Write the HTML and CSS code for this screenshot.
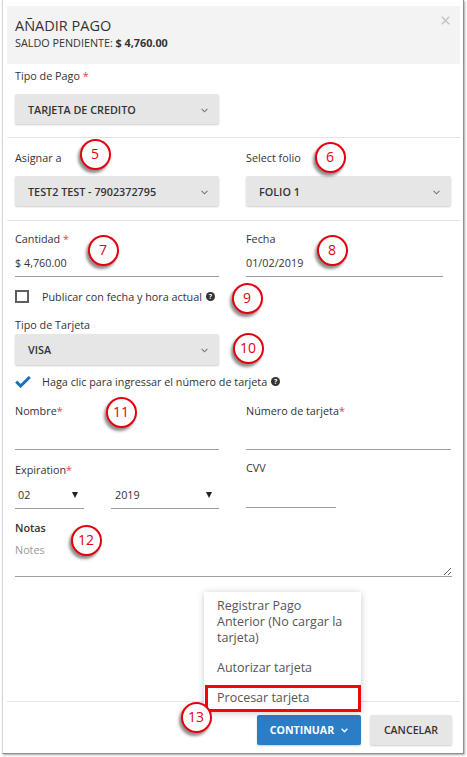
FILE: index.html
```html
<!DOCTYPE html>
<html lang="es">
<head>
<meta charset="utf-8">
<title>Añadir pago</title>
<link rel="stylesheet" href="styles.css">
</head>
<body>
<div class="frame">
  <div class="modal-header">
    <div class="titles">
      <h1 class="title">AÑADIR PAGO</h1>
      <p class="subtitle">SALDO PENDIENTE: <b>$ 4,760.00</b></p>
    </div>
    <button class="close" type="button" aria-label="Cerrar">
      <svg width="9" height="9" viewBox="0 0 9 9"><path d="M0.8 0.8 L8.2 8.2 M8.2 0.8 L0.8 8.2" stroke="#c4c4c4" stroke-width="1.5" fill="none"/></svg>
    </button>
  </div>

  <form class="modal-body">
    <section class="section s1">
      <label class="label">Tipo de Pago <span class="req">*</span></label>
      <div class="select col-left">
        <span>TARJETA DE CREDITO</span>
        <svg class="chev" width="7" height="5" viewBox="0 0 7 5"><path d="M0.6 0.8 L3.5 3.8 L6.4 0.8" stroke="#777" stroke-width="1.1" fill="none"/></svg>
      </div>
    </section>

    <section class="section s2">
      <div class="grid">
        <div class="field">
          <label class="label">Asignar a</label>
          <div class="select">
            <span>TEST2 TEST - 7902372795</span>
            <svg class="chev" width="7" height="5" viewBox="0 0 7 5"><path d="M0.6 0.8 L3.5 3.8 L6.4 0.8" stroke="#777" stroke-width="1.1" fill="none"/></svg>
          </div>
        </div>
        <div class="field">
          <label class="label">Select folio</label>
          <div class="select">
            <span>FOLIO 1</span>
            <svg class="chev" width="7" height="5" viewBox="0 0 7 5"><path d="M0.6 0.8 L3.5 3.8 L6.4 0.8" stroke="#777" stroke-width="1.1" fill="none"/></svg>
          </div>
        </div>
      </div>
    </section>

    <section class="s3">
      <div class="grid">
        <div class="field">
          <label class="label">Cantidad <span class="req">*</span></label>
          <div class="input">$ 4,760.00</div>
        </div>
        <div class="field">
          <label class="label">Fecha</label>
          <div class="input fecha">01/02/2019</div>
        </div>
      </div>

      <div class="check-row r1">
        <span class="checkbox"></span>
        <span>Publicar con fecha y hora actual</span>
        <span class="help">?</span>
      </div>

      <label class="label card-label">Tipo de Tarjeta</label>
      <div class="select col-left tight">
        <span>VISA</span>
        <svg class="chev" width="7" height="5" viewBox="0 0 7 5"><path d="M0.6 0.8 L3.5 3.8 L6.4 0.8" stroke="#777" stroke-width="1.1" fill="none"/></svg>
      </div>

      <div class="check-row r2">
        <svg class="tick" width="16" height="12" viewBox="0 0 16 12"><path d="M1.2 5.6 L5.6 10 L14.8 1" stroke="#1a72b9" stroke-width="3" fill="none"/></svg>
        <span>Haga clic para ingressar el número de tarjeta</span>
        <span class="help">?</span>
      </div>

      <div class="grid row-name">
        <div class="field">
          <label class="label">Nombre<span class="req">*</span></label>
          <div class="input tall"></div>
        </div>
        <div class="field">
          <label class="label">Número de tarjeta<span class="req">*</span></label>
          <div class="input tall"></div>
        </div>
      </div>

      <div class="grid row-exp">
        <div class="field exp">
          <label class="label">Expiration<span class="req">*</span></label>
          <div class="exp-selects">
            <div class="mini-select month">
              <span>02</span>
              <svg width="6" height="6" viewBox="0 0 6 6"><path d="M0 0 H6 L3 6 Z" fill="#222"/></svg>
            </div>
            <div class="mini-select year">
              <span>2019</span>
              <svg width="6" height="6" viewBox="0 0 6 6"><path d="M0 0 H6 L3 6 Z" fill="#222"/></svg>
            </div>
          </div>
        </div>
        <div class="field cvv">
          <label class="label">CVV</label>
          <div class="input cvv-input"></div>
        </div>
      </div>

      <label class="label bold notes-label">Notas</label>
      <textarea class="notes" placeholder="Notes"></textarea>
    </section>
  </form>

  <div class="modal-footer">
    <div class="btn-group">
      <ul class="menu">
        <li class="item i1">Registrar Pago Anterior (No cargar la tarjeta)</li>
        <li class="item i2">Autorizar tarjeta</li>
        <li class="item i3">Procesar tarjeta</li>
      </ul>
      <button class="btn btn-primary" type="button">
        <span>CONTINUAR</span>
        <svg width="7" height="5" viewBox="0 0 7 5"><path d="M0.6 0.8 L3.5 3.8 L6.4 0.8" stroke="#fff" stroke-width="1.3" fill="none"/></svg>
      </button>
    </div>
    <button class="btn btn-default" type="button">CANCELAR</button>
  </div>
</div>

<div class="callout c5">5</div>
<div class="callout c6">6</div>
<div class="callout c7">7</div>
<div class="callout c8">8</div>
<div class="callout c9">9</div>
<div class="callout c10">10</div>
<div class="callout c11">11</div>
<div class="callout c12">12</div>
<div class="callout c13">13</div>
</body>
</html>
```

FILE: styles.css
```css
* { box-sizing: border-box; }

html, body {
  margin: 0;
  padding: 0;
}

body {
  position: relative;
  width: 467px;
  height: 757px;
  overflow: hidden;
  background: #fff;
  color: #333;
  font-family: "Open Sans", "DejaVu Sans", sans-serif;
}

.frame {
  margin-left: 2px;
  width: 462px;
  height: 754px;
  border-left: 1px solid #d6d6d6;
  border-right: 1px solid #8e8e8e;
  border-bottom: 1px solid #8e8e8e;
  box-shadow: 1px 1px 2px rgba(0, 0, 0, 0.35);
  padding: 6px 3px 0 4px;
  display: flex;
  flex-direction: column;
}

/* header */
.modal-header {
  height: 58px;
  background: #f3f3f3;
  padding: 10px 10px 0 8px;
  display: flex;
  justify-content: space-between;
  align-items: flex-start;
}

.title {
  margin: 0;
  font-size: 14.5px;
  line-height: 20px;
  font-weight: 400;
  color: #333;
}

.subtitle {
  margin: 0;
  font-size: 10.8px;
  line-height: 14px;
  color: #333;
}

.subtitle b { font-weight: 700; }

.close {
  width: 9px;
  height: 9px;
  padding: 0;
  margin: 0;
  border: 0;
  background: none;
  display: flex;
}

/* body */
.modal-body { margin: 0; }

.section {
  padding-left: 8px;
  padding-right: 8px;
  border-bottom: 1px solid #e4e4e4;
}

.s1 { padding-top: 3px; padding-bottom: 13px; }
.s2 { padding-top: 11px; padding-bottom: 14px; }
.s3 { padding: 9px 8px 0; }

.label {
  display: block;
  font-size: 10.8px;
  line-height: 17px;
  color: #333;
}

.label.bold { font-weight: 600; }

.req { color: #e8433f; }

.grid {
  display: grid;
  grid-template-columns: 204px 205px;
  column-gap: 27px;
  align-items: start;
}

.select {
  height: 30px;
  margin-top: 10px;
  background: #e6e6e6;
  border-radius: 2px;
  box-shadow: 0 1px 2px rgba(0, 0, 0, 0.2);
  display: flex;
  align-items: center;
  justify-content: space-between;
  padding: 0 11px 0 13px;
  font-size: 10.8px;
  font-weight: 600;
  color: #333;
}

.select .chev { margin-top: 2px; }

.col-left { width: 204px; }

.select.tight {
  margin-top: 1px;
  height: 31px;
}

.input {
  height: 30px;
  padding: 7px 0 5px;
  font-size: 10.8px;
  line-height: 17px;
  color: #333;
  border-bottom: 1px solid #9e9e9e;
}

.input.fecha { width: 197px; }
.input.tall { height: 31px; padding-top: 8px; }

.check-row {
  display: flex;
  align-items: center;
  font-size: 10.8px;
  line-height: 17px;
  color: #333;
}

.check-row.r1 { margin-top: 11px; }
.check-row.r2 { margin-top: 8px; }

.checkbox {
  width: 14px;
  height: 13px;
  border: 2px solid #5e5e5e;
  background: #fff;
  margin-right: 13px;
}

.tick { margin-right: 11px; }

.help {
  width: 9px;
  height: 9px;
  margin-left: 4px;
  border-radius: 50%;
  background: #333;
  color: #fff;
  font-size: 7px;
  font-weight: 700;
  line-height: 9px;
  text-align: center;
}

.card-label { margin-top: 11px; }

.row-name { margin-top: 12px; }

.exp { margin-top: 11px; }
.cvv { margin-top: 9px; }

.exp-selects {
  display: flex;
  gap: 27px;
}

.mini-select {
  height: 31px;
  padding-top: 8px;
  padding-bottom: 5px;
  display: flex;
  align-items: center;
  justify-content: space-between;
  font-size: 10.8px;
  line-height: 17px;
  color: #333;
  border-bottom: 1px solid #9e9e9e;
}

.mini-select.month { width: 69px; padding-left: 3px; padding-right: 6px; }
.mini-select.year { width: 108px; padding-left: 4px; padding-right: 7px; }

.cvv-input { width: 90px; height: 32px; padding-top: 9px; }

.notes-label { margin-top: 10px; }

.notes {
  display: block;
  width: 100%;
  height: 41px;
  margin: 0;
  padding: 5px 0 18px;
  border: 0;
  border-bottom: 1px solid #9e9e9e;
  border-radius: 0;
  background: #fff;
  font-family: "Open Sans", "DejaVu Sans", sans-serif;
  font-size: 10.8px;
  line-height: 17px;
  color: #333;
  resize: vertical;
  outline: none;
}

.notes::placeholder { color: #9a9a9a; }

/* footer */
.modal-footer {
  margin-top: auto;
  border-top: 1px solid #e4e4e4;
  padding: 13px 8px 8px;
  display: flex;
  justify-content: flex-end;
  gap: 9px;
}

.btn-group { position: relative; }

.btn {
  height: 30px;
  margin: 0;
  border: 0;
  border-radius: 2px;
  font-family: "Open Sans", "DejaVu Sans", sans-serif;
  font-size: 10.6px;
  display: flex;
  align-items: center;
  justify-content: center;
  box-shadow: 0 1px 2px rgba(0, 0, 0, 0.2);
}

.btn-primary {
  width: 104px;
  background: #2b7dc6;
  color: #fff;
  font-weight: 700;
  gap: 7px;
}

.btn-default {
  width: 82px;
  background: #e6e6e6;
  color: #333;
  font-weight: 600;
}

.menu {
  position: absolute;
  right: 0;
  bottom: calc(100% + 3px);
  width: 157px;
  margin: 0;
  padding: 6px 0 0;
  list-style: none;
  background: #fff;
  box-shadow: 0 1px 7px rgba(0, 0, 0, 0.22);
  font-size: 12.5px;
  line-height: 16px;
  color: #555;
}

.item.i1 { padding: 0 12px 7px 13px; }
.item.i2 { padding: 7px 12px 9px 13px; }
.item.i3 {
  margin-left: 1px;
  border: 3px solid #ea0a0a;
  padding: 2px 8px 3px 9px;
}

/* annotation callouts */
.callout {
  position: absolute;
  width: 31px;
  height: 31px;
  border-radius: 50%;
  border: 2.5px solid #e4000d;
  background: #fff;
  color: #e4000d;
  font-family: "Open Sans", "DejaVu Sans", sans-serif;
  font-size: 14px;
  line-height: 1;
  display: flex;
  align-items: center;
  justify-content: center;
  box-shadow: -2px 3px 3px rgba(0, 0, 0, 0.45);
}

.c5  { left: 79.5px;  top: 138.5px; }
.c6  { left: 314.5px; top: 141.5px; }
.c7  { left: 87.5px;  top: 234.5px; }
.c8  { left: 316.5px; top: 234.5px; }
.c9  { left: 231.5px; top: 282.5px; }
.c10 { left: 232.5px; top: 332.5px; }
.c11 { left: 105.5px; top: 396.5px; }
.c12 { left: 70.5px;  top: 524.5px; }
.c13 { left: 180.5px; top: 701.5px; }
```
